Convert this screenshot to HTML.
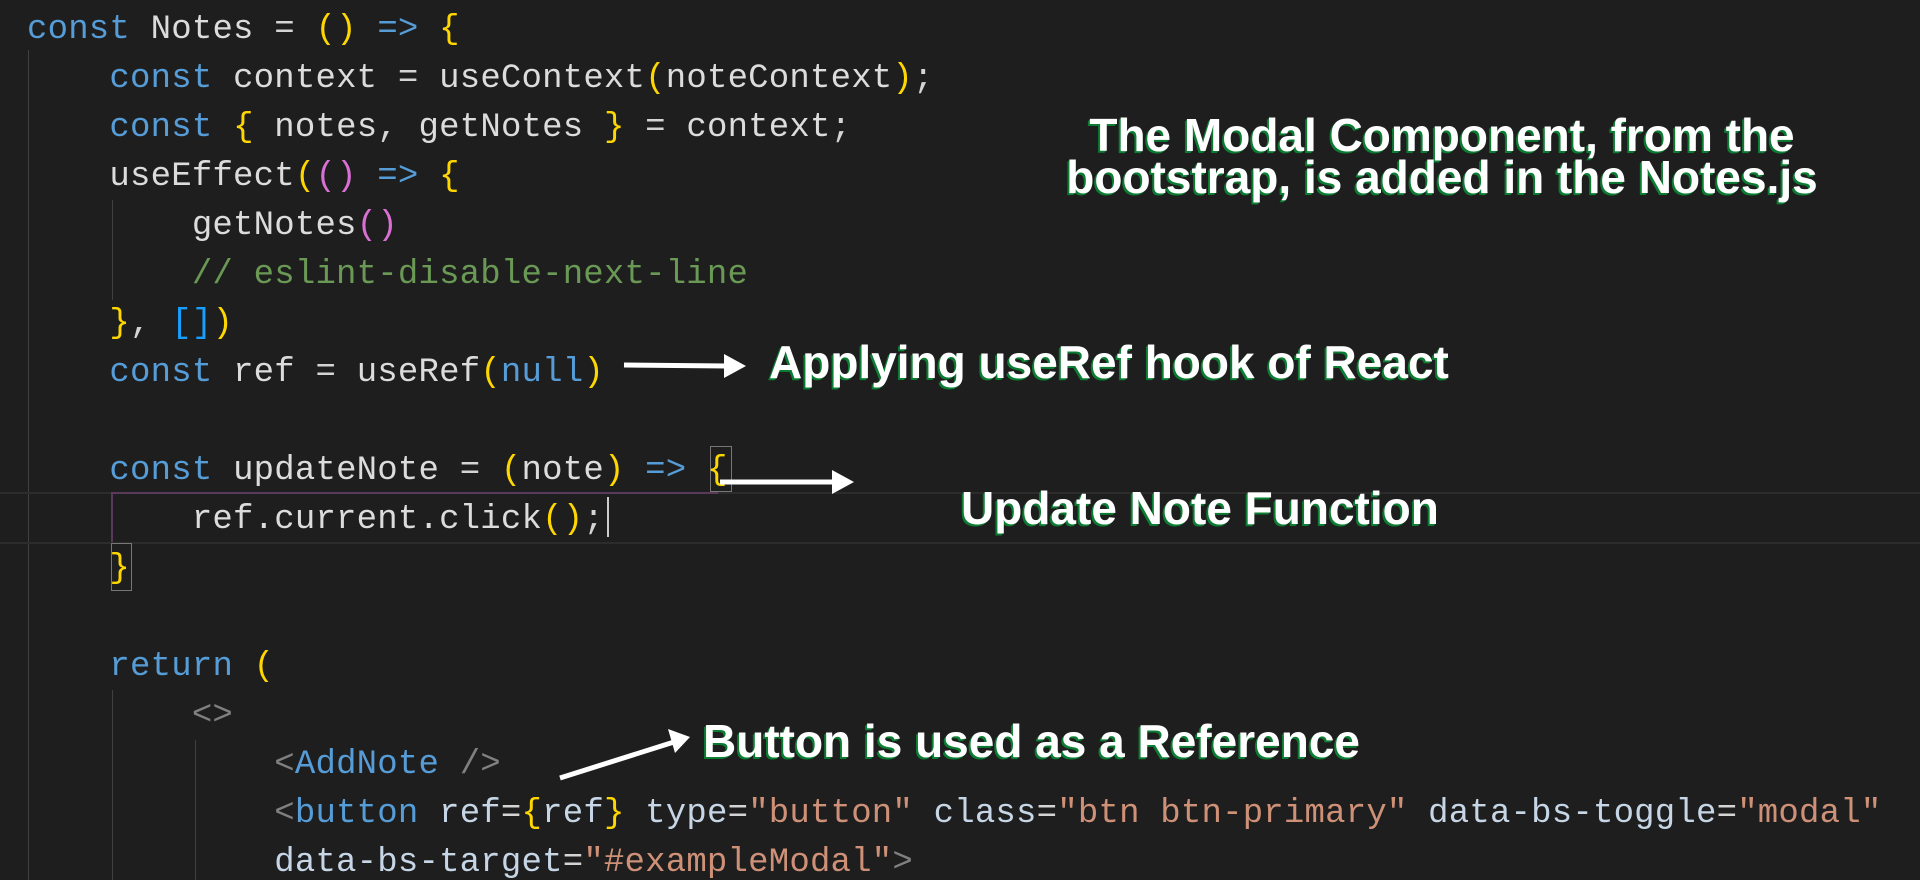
<!DOCTYPE html>
<html><head><meta charset="utf-8"><style>
html,body{margin:0;padding:0;background:#1e1e1e;width:1920px;height:880px;overflow:hidden;position:relative}
.code{position:absolute;left:0;top:6px;font-family:"Liberation Mono",monospace;font-size:34px;line-height:49px;color:#d4d4d4;white-space:pre;letter-spacing:0.2px}
.l{position:absolute;left:27px;height:49px}
.k{color:#569cd6}.y{color:#ffd700}.m{color:#da70d6}.b{color:#179fff}.c{color:#6a9955}.s{color:#ce9178}.g{color:#808080}.t{color:#4ec9b0}.a{color:#c6d6e6}.v{color:#dcdcdc}
.guide{position:absolute;width:1px;background:#404040}
.ann{position:absolute;font-family:"Liberation Sans",sans-serif;font-weight:bold;color:#fff;text-shadow:-2px 2px 0 #0b7d32,-1px 1px 0 #0b7d32;white-space:nowrap;font-size:46px}
</style></head><body>
<div class="guide" style="left:28px;top:50px;height:830px"></div>
<div class="guide" style="left:112px;top:200px;height:100px"></div>
<div class="guide" style="left:112px;top:690px;height:190px"></div>
<div class="guide" style="left:195px;top:740px;height:140px"></div>
<div style="position:absolute;left:0;top:492px;width:1920px;height:48px;border-top:2px solid #2c2c2c;border-bottom:2px solid #2c2c2c"></div>
<div style="position:absolute;left:111px;top:492px;width:605px;height:48px;border-top:2px solid #5a3a5a;border-left:2px solid #5a3a5a"></div>
<div style="position:absolute;left:710px;top:446px;width:20px;height:44px;border:1px solid #777"></div>
<div style="position:absolute;left:111px;top:543px;width:19px;height:46px;border:1px solid #777"></div>
<div style="position:absolute;left:607px;top:497px;width:2px;height:40px;background:#ccc"></div>
<div class="code">
<div class="l" style="top:0"><span class="k">const</span> <span class="v">Notes</span> = <span class="y">()</span> <span class="k">=&gt;</span> <span class="y">{</span></div>
<div class="l" style="top:49px">    <span class="k">const</span> <span class="v">context</span> = <span class="v">useContext</span><span class="y">(</span><span class="v">noteContext</span><span class="y">)</span>;</div>
<div class="l" style="top:98px">    <span class="k">const</span> <span class="y">{</span> <span class="v">notes</span>, <span class="v">getNotes</span> <span class="y">}</span> = <span class="v">context</span>;</div>
<div class="l" style="top:147px">    <span class="v">useEffect</span><span class="y">(</span><span class="m">()</span> <span class="k">=&gt;</span> <span class="y">{</span></div>
<div class="l" style="top:196px">        <span class="v">getNotes</span><span class="m">()</span></div>
<div class="l" style="top:245px">        <span class="c">// eslint-disable-next-line</span></div>
<div class="l" style="top:294px">    <span class="y">}</span>, <span class="b">[]</span><span class="y">)</span></div>
<div class="l" style="top:343px">    <span class="k">const</span> <span class="v">ref</span> = <span class="v">useRef</span><span class="y">(</span><span class="k">null</span><span class="y">)</span></div>
<div class="l" style="top:441px">    <span class="k">const</span> <span class="v">updateNote</span> = <span class="y">(</span><span class="v">note</span><span class="y">)</span> <span class="k">=&gt;</span> <span class="y">{</span></div>
<div class="l" style="top:490px">        <span class="v">ref.current.click</span><span class="y">()</span>;</div>
<div class="l" style="top:539px">    <span class="y">}</span></div>
<div class="l" style="top:637px">    <span class="k">return</span> <span class="y">(</span></div>
<div class="l" style="top:686px">        <span class="g">&lt;&gt;</span></div>
<div class="l" style="top:735px">            <span class="g">&lt;</span><span class="k">AddNote</span> <span class="g">/&gt;</span></div>
<div class="l" style="top:784px">            <span class="g">&lt;</span><span class="k">button</span> <span class="a">ref</span>=<span class="y">{</span><span class="a">ref</span><span class="y">}</span> <span class="a">type</span>=<span class="s">"button"</span> <span class="a">class</span>=<span class="s">"btn btn-primary"</span> <span class="a">data-bs-toggle</span>=<span class="s">"modal"</span></div>
<div class="l" style="top:833px">            <span class="a">data-bs-target</span>=<span class="s">"#exampleModal"</span><span class="g">&gt;</span></div>
</div>
<div class="ann" style="left:1042px;top:114px;width:800px;text-align:center;line-height:42px">The Modal Component, from the<br>bootstrap, is added in the Notes.js</div>
<div class="ann" style="left:769px;top:335px">Applying useRef hook of React</div>
<div class="ann" style="left:961px;top:481px">Update Note Function</div>
<div class="ann" style="left:703px;top:714px">Button is used as a Reference</div>
<svg style="position:absolute;left:0;top:0" width="1920" height="880">
<g stroke="#fff" stroke-width="5" fill="#fff">
<line x1="624" y1="365" x2="728" y2="366"/><polygon points="724,354 746,366 724,378" stroke="none"/>
<line x1="720" y1="482" x2="836" y2="482"/><polygon points="832,470 854,482 832,494" stroke="none"/>
<line x1="560" y1="778" x2="674" y2="742"/><polygon points="668,729 690,737 675,753" stroke="none"/>
</g></svg>
</body></html>
